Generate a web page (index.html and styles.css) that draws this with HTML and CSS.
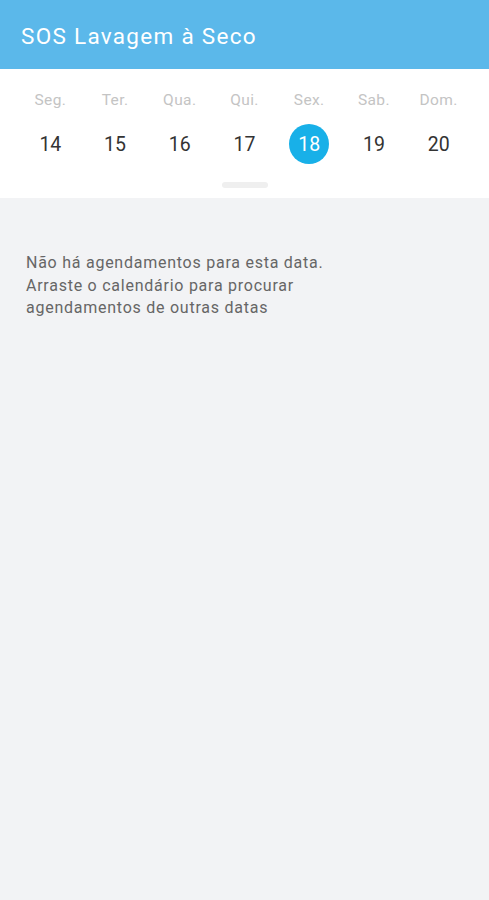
FILE: index.html
```html
<!DOCTYPE html>
<html lang="pt">
<head>
<meta charset="utf-8">
<link rel="stylesheet" href="styles.css">
</head>
<body>
<header class="appbar">
  <h1 class="title">SOS Lavagem à Seco</h1>
</header>
<section class="calendar">
  <div class="week">
    <div class="day"><span class="dname">Seg.</span><span class="dnum">14</span></div>
    <div class="day"><span class="dname">Ter.</span><span class="dnum">15</span></div>
    <div class="day"><span class="dname">Qua.</span><span class="dnum">16</span></div>
    <div class="day"><span class="dname">Qui.</span><span class="dnum">17</span></div>
    <div class="day"><span class="dname">Sex.</span><span class="dnum selected">18</span></div>
    <div class="day"><span class="dname">Sab.</span><span class="dnum">19</span></div>
    <div class="day"><span class="dname">Dom.</span><span class="dnum">20</span></div>
  </div>
  <div class="handle"></div>
</section>
<main class="content">
  <p class="empty">Não há agendamentos para esta data.<br>Arraste o calendário para procurar<br>agendamentos de outras datas</p>
</main>
</body>
</html>
```
FILE: styles.css
```css
* { box-sizing: border-box; }
html, body { margin: 0; padding: 0; }
body {
  font-family: Roboto, "Noto Sans", sans-serif;
  background: #f2f3f5;
  width: 489px;
  min-height: 900px;
}
.appbar {
  height: 69px;
  background: #5bb8ea;
  display: flex;
  align-items: center;
  padding: 0 21px;
}
.title {
  margin: 0;
  color: #fff;
  font-size: 22.5px;
  font-weight: 400;
  letter-spacing: 1.3px;
  padding-top: 3px;
}
.calendar {
  background: #fff;
  height: 129px;
  padding: 0 18px;
  display: flex;
  flex-direction: column;
  align-items: center;
}
.week {
  width: 100%;
  display: grid;
  grid-template-columns: repeat(7, 1fr);
  padding-top: 21px;
}
.day {
  display: flex;
  flex-direction: column;
  align-items: center;
}
.dname {
  font-size: 15.5px;
  letter-spacing: 0.4px;
  color: #c4c4c4;
  line-height: 20px;
}
.dnum {
  margin-top: 14px;
  width: 40px;
  height: 40px;
  border-radius: 50%;
  display: flex;
  align-items: center;
  justify-content: center;
  font-size: 19.5px;
  color: #333;
}
.dnum.selected {
  background: #18b0e8;
  color: #fff;
}
.handle {
  margin-top: 18px;
  width: 46px;
  height: 6px;
  border-radius: 3px;
  background: #efefef;
}
.content {
  padding: 54px 26px;
}
.empty {
  margin: 0;
  font-size: 16px;
  letter-spacing: 0.75px;
  line-height: 22.5px;
  color: #666;
}
```
